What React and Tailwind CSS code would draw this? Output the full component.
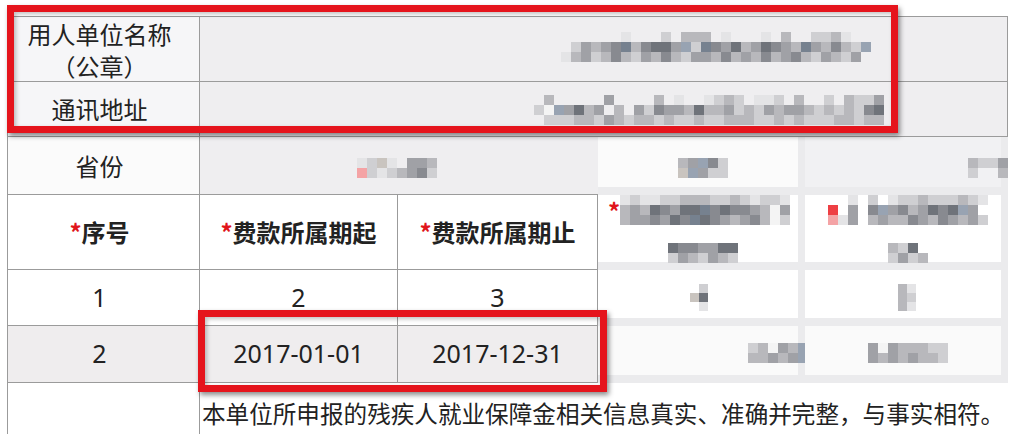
import React from 'react';

// grey shades used by the pixelated (blurred) parts of the screenshot
const PALETTE = {
    a: '#e4e4e6',
    b: '#cfcfd2',
    c: '#b8b8bc',
    d: '#a0a1a6',
    e: '#888a90',
    f: '#6f737a',
    g: '#98a3b2',
    h: '#76818f',
    k: '#c9c4bf',
    w: '#f4f4f4',
    r: '#ee3f44',
    p: '#f4a3a5',
};

function Mosaic({ rows, size = 10 }) {
    const w = rows[0].length * size;
    const h = rows.length * size;
    return (
        <svg width={w} height={h} className="block shrink-0">
            {rows.flatMap((row, y) =>
                row.split('').map((ch, x) =>
                    ch === '.' ? null : (
                        <rect key={`${x}-${y}`} x={x * size} y={y * size} width={size} height={size} fill={PALETTE[ch]} />
                    )
                )
            )}
        </svg>
    );
}

function Star() {
    return <span className="text-[#e0141b]">*</span>;
}

const line = 'border-[#9b9b9b]';
const soft = 'border-r-[7px] border-b-[8px] border-[#ebebed]';
const num = "font-['Noto_Sans','Open_Sans',sans-serif] text-[25px]";
// first column: content sits a little left of the cell centre
const first = `border-l border-r border-b ${line} pr-[8px]`;

export default function App() {
    return (
        <div className="relative w-[1012px] h-[434px] overflow-hidden bg-white text-[24px] text-[#222] font-['Noto_Sans_CJK_SC','Noto_Sans',sans-serif]">
            <div className="ml-[7px] pt-[16px] grid grid-cols-[193px_198px_200px_207px_203px] grid-rows-[66px_55px_58px_75px_56px_57px_51px]">
                {/* row 1 */}
                <div className={`border-t ${first} bg-[#f6f6f8] flex flex-col items-center justify-center pt-[1px] leading-[32px]`}>
                    <span>用人单位名称</span>
                    <span>（公章）</span>
                </div>
                <div className={`col-span-4 border-t border-r border-b ${line} bg-[#efeef0] pl-[331px] pt-[15px]`}>
                    <Mosaic
                        rows={[
                            '.........a...b.ccc.a...a.c..bbca...',
                            '....bdcdehceffdgbhedfcdfedchdcecbg.',
                            '...acdbcecbdcecbddcecdcecdecbdcbd..',
                        ]}
                    />
                </div>

                {/* row 2 */}
                <div className={`${first} bg-[#f6f6f8] flex items-center justify-center`}>
                    通讯地址
                </div>
                <div className={`col-span-4 border-r border-b ${line} bg-[#efeef0] pl-[324px] pt-[13px]`}>
                    <Mosaic
                        rows={[
                            '..c.....d....c.a..abcb.aab.c..b.cbbd',
                            '.bwgdfcd.c.dbeddcfccdbcbdcddcbcbcbef',
                            '..bbbccbdcbccbcbbcbbcccbbcbcbbbccbcc',
                        ]}
                    />
                </div>

                {/* row 3 */}
                <div className={`${first} bg-[#fbfbfb] flex items-center justify-center`}>
                    省份
                </div>
                <div className={`col-span-2 border-b ${line} bg-[#efeef0] pl-[157px] pt-[21px]`}>
                    <Mosaic rows={['abka.ddc', 'pbabcdeb']} />
                </div>
                <div className={`${soft} bg-[#fbfbfb] pl-[80px] pt-[21px]`}>
                    <Mosaic rows={['cdgeb', 'kgdbb']} />
                </div>
                <div className={`${soft} bg-[#f1f1f3] pl-[163px] pt-[21px]`}>
                    <Mosaic rows={['cbbd', 'b..c']} />
                </div>

                {/* row 4: header */}
                <div className={`${first} flex items-center justify-center font-bold`}>
                    <Star />序号
                </div>
                <div className={`border-r border-b ${line} flex items-center justify-center font-bold`}>
                    <Star />费款所属期起
                </div>
                <div className={`border-r border-b ${line} flex items-center justify-center font-bold`}>
                    <Star />费款所属期止
                </div>
                <div className={`${soft} flex flex-col`}>
                    <div className="flex items-start">
                        <span className="pl-[10px] pt-[4px] leading-[24px] font-bold text-[#e0141b]">*</span>
                        <Mosaic
                            rows={[
                                'abaabbcccbbcbabba',
                                'cdcfedffhefeedcwd',
                                'cddedfehfedcdecwb',
                            ]}
                        />
                    </div>
                    <div className="pl-[70px] pt-[18px]">
                        <Mosaic rows={['feeddff', 'bdcbdcb']} />
                    </div>
                </div>
                <div className={`${soft} flex flex-col`}>
                    <div className="pl-[13px] pt-[0px]">
                        <Mosaic
                            rows={[
                                '...a.b.abbcbbbcba',
                                '.r.d.egdecdfefgd.',
                                '.pad.cdccedcedcdb',
                            ]}
                        />
                    </div>
                    <div className="pl-[83px] pt-[18px]">
                        <Mosaic rows={['cbf.', 'bdbc']} />
                    </div>
                </div>

                {/* row 5 */}
                <div className={`${first} ${num} flex items-center justify-center`}>1</div>
                <div className={`border-r border-b ${line} ${num} flex items-center justify-center`}>2</div>
                <div className={`border-r border-b ${line} ${num} flex items-center justify-center`}>3</div>
                <div className={`${soft} pl-[92px] pt-[14px]`}>
                    <Mosaic rows={['.b', 'kf', '.a']} size={9} />
                </div>
                <div className={`${soft} pl-[93px] pt-[14px]`}>
                    <Mosaic rows={['ca', 'cb', 'ca']} size={9} />
                </div>

                {/* row 6 */}
                <div className={`${first} ${num} bg-[#efedee] flex items-center justify-center`}>2</div>
                <div className={`border-r border-b ${line} ${num} bg-[#efedee] flex items-center justify-center`}>2017-01-01</div>
                <div className={`border-r border-b ${line} ${num} bg-[#efedee] flex items-center justify-center`}>2017-12-31</div>
                <div className={`${soft} bg-[#fafafa] pl-[150px] pt-[17px]`}>
                    <Mosaic rows={['bcwdcg', 'ccdcdg']} />
                </div>
                <div className={`${soft} bg-[#fafafa] pl-[63px] pt-[17px]`}>
                    <Mosaic rows={['dwdcccbb', 'dcdcdccb']} />
                </div>

                {/* row 7 */}
                <div className={`border-l border-r ${line}`} />
                <div className="col-span-4 pl-[2px] pt-[15px] whitespace-nowrap leading-[30px] text-[23.6px]">
                    本单位所申报的残疾人就业保障金相关信息真实、准确并完整，与事实相符。
                </div>
            </div>

            {/* red annotation boxes */}
            <div className="absolute left-[7px] top-[5px] w-[891px] h-[128px] border-[7px] border-[#e5141c] shadow-[inset_2px_2px_4px_rgba(0,0,0,0.25),2px_3px_5px_rgba(0,0,0,0.45)]" />
            <div className="absolute left-[198px] top-[310px] w-[409px] h-[82px] border-[7px] border-[#e5141c] shadow-[inset_2px_2px_4px_rgba(0,0,0,0.25),2px_3px_5px_rgba(0,0,0,0.45)]" />
        </div>
    );
}
